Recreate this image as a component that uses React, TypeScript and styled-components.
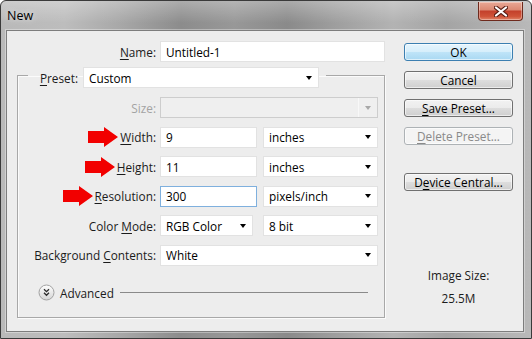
import styled, { createGlobalStyle } from 'styled-components';

const GlobalStyle = createGlobalStyle`
  html, body {
    margin: 0;
    padding: 0;
    background: #ffffff;
  }
  body {
    font-family: 'Open Sans', 'Segoe UI', sans-serif;
    font-size: 11.8px;
    color: #1b1b1b;
  }
`;

const Window = styled.div`
  box-sizing: border-box;
  width: 532px;
  height: 339px;
  display: flex;
  flex-direction: column;
  border: 1px solid #3a3a3a;
  border-radius: 6px 6px 0 0;
  overflow: hidden;
  background:
    linear-gradient(180deg, rgba(255, 255, 255, 0.28) 0px, rgba(255, 255, 255, 0) 22px),
    linear-gradient(
      90deg,
      #b9b9b9 0%,
      #bdbdbd 12%,
      #a9a9a9 22%,
      #8c8c8c 34%,
      #989898 44%,
      #8a8a8a 54%,
      #9e9e9e 63%,
      #b3b3b3 74%,
      #a4a4a4 84%,
      #b9b9b9 100%
    );
`;

const TitleBar = styled.div`
  height: 29px;
  flex: none;
  display: flex;
  align-items: center;
  justify-content: space-between;
  padding: 0 8px 0 6px;
`;

const Title = styled.span`
  font-size: 12.5px;
  color: #000;
  text-shadow: 0 0 6px rgba(255, 255, 255, 0.7);
`;

const CloseButton = styled.div`
  align-self: flex-start;
  margin-top: 1px;
  box-sizing: border-box;
  width: 45px;
  height: 19px;
  display: flex;
  align-items: center;
  justify-content: center;
  border: 1px solid #6e2a1d;
  border-top: none;
  border-radius: 0 0 4px 4px;
  background: linear-gradient(180deg, #e9a896 0%, #dc8a74 42%, #c4412c 52%, #cf5338 80%, #e0866a 100%);
  box-shadow: inset 0 0 0 1px rgba(255, 255, 255, 0.35);
`;

const Panel = styled.div`
  flex: 1;
  display: flex;
  margin: 0 7px 6px 5px;
  padding: 10px 10px 0 10px;
  border: 1px solid #7d7d7d;
  background: #ededed;
  box-shadow: 0 0 0 1px rgba(255, 255, 255, 0.35);
`;

const FormColumn = styled.div`
  width: 368px;
  display: flex;
  flex-direction: column;
`;

const FieldRow = styled.div`
  display: flex;
  align-items: center;
  gap: 4px;
  height: 21px;
`;

const FieldLabel = styled.label<{ $width: number; $disabled?: boolean }>`
  width: ${(p) => p.$width}px;
  flex: none;
  display: flex;
  align-items: center;
  justify-content: flex-end;
  gap: 2px;
  white-space: nowrap;
  color: ${(p) => (p.$disabled ? '#a3a3a3' : '#1b1b1b')};

  u {
    text-decoration: underline;
    text-underline-offset: 2px;
  }
`;

const FieldPair = styled.div<{ $gap?: number }>`
  display: flex;
  gap: ${(p) => p.$gap ?? 6}px;
`;

const TextField = styled.input<{ $width: number; $focused?: boolean }>`
  box-sizing: border-box;
  width: ${(p) => p.$width}px;
  height: 21px;
  margin: 0;
  padding: 0 5px;
  font: inherit;
  color: #000;
  background: #fff;
  border: 1px solid ${(p) => (p.$focused ? '#7fb0de' : '#e2e2e2')};
  outline: none;
`;

const Combo = styled.div<{ $width: number; $disabled?: boolean }>`
  box-sizing: border-box;
  width: ${(p) => p.$width}px;
  height: 21px;
  display: flex;
  align-items: center;
  justify-content: space-between;
  padding-left: 5px;
  color: #000;
  background: ${(p) => (p.$disabled ? '#efefef' : '#fff')};
  border: 1px solid ${(p) => (p.$disabled ? '#cdcdcd' : '#e2e2e2')};
`;

const CaretBox = styled.span<{ $disabled?: boolean }>`
  width: 18px;
  height: 100%;
  display: flex;
  align-items: center;
  justify-content: center;
  border-left: 1px solid ${(p) => (p.$disabled ? '#f8f8f8' : 'transparent')};
`;

const Caret = styled.span<{ $disabled?: boolean }>`
  width: 0;
  height: 0;
  border-left: 3.5px solid transparent;
  border-right: 3.5px solid transparent;
  border-top: 4px solid ${(p) => (p.$disabled ? '#a8a8a8' : '#000')};
`;

const GroupBox = styled.fieldset`
  margin: 1px 0 0 0;
  padding: 9px 6px 16px 0;
  min-width: 0;
  display: flex;
  flex-direction: column;
  gap: 8.5px;
  border: 1px solid #a8a8a8;
  box-shadow: 1px 1px 0 #fbfbfb, inset 1px 1px 0 #fbfbfb;
`;

const GroupLegend = styled.legend`
  margin-left: 10px;
  padding: 4px 7px 0 0;
  display: flex;
  align-items: center;
  gap: 5px;
`;

const AdvancedRow = styled.div`
  display: flex;
  align-items: center;
  gap: 5px;
  height: 17px;
  margin: 10px 10px 0 20px;
  color: #1b1b1b;
`;

const Rule = styled.span`
  flex: 1;
  height: 1px;
  margin-left: 1px;
  background: #8a8a8a;
`;

const ButtonColumn = styled.div`
  width: 109px;
  margin-left: 19px;
  padding-top: 2px;
  display: flex;
  flex-direction: column;
  gap: 10px;
`;

const DialogButton = styled.button<{ $variant?: 'default' | 'normal' | 'disabled'; $spaced?: boolean }>`
  box-sizing: border-box;
  height: 18px;
  margin: ${(p) => (p.$spaced ? '18px 0 0 0' : '0')};
  padding: 0;
  font: inherit;
  line-height: 16px;
  border-radius: 3px;
  color: ${(p) => (p.$variant === 'disabled' ? '#8a8a8a' : '#000')};
  border: 1px solid
    ${(p) => (p.$variant === 'default' ? '#3c7fb1' : p.$variant === 'disabled' ? '#adb2b5' : '#707070')};
  background: ${(p) =>
    p.$variant === 'default'
      ? 'linear-gradient(180deg, #e6f5fd 0%, #d6eefb 50%, #bfe4f8 51%, #a9d8f2 100%)'
      : p.$variant === 'disabled'
        ? '#f4f4f4'
        : 'linear-gradient(180deg, #f2f2f2 0%, #ebebeb 50%, #dddddd 51%, #cfcfcf 100%)'};
  box-shadow: inset 0 0 0 1px rgba(255, 255, 255, 0.6);

  u {
    text-decoration: underline;
    text-underline-offset: 2px;
  }
`;

const ImageSize = styled.div`
  margin-top: 66px;
  display: flex;
  flex-direction: column;
  align-items: center;
  gap: 7px;
  line-height: 16px;
  color: #1b1b1b;
`;

const RedArrow = () => (
  <svg width="30" height="20" viewBox="0 0 30 20">
    <polygon points="0,4 16,4 16,0 30,10 16,20 16,16 0,16" fill="#f20000" />
  </svg>
);

const CloseGlyph = () => (
  <svg width="14" height="11" viewBox="0 0 14 11">
    <path d="M2 1.5 L12 9.5 M12 1.5 L2 9.5" stroke="#5a1f15" strokeWidth="4.2" strokeLinecap="round" />
    <path d="M2 1.5 L12 9.5 M12 1.5 L2 9.5" stroke="#ffffff" strokeWidth="2.2" strokeLinecap="round" />
  </svg>
);

const ChevronButton = () => (
  <svg width="17" height="17" viewBox="0 0 17 17">
    <defs>
      <linearGradient id="advFill" x1="0" y1="0" x2="0" y2="1">
        <stop offset="0" stopColor="#ffffff" />
        <stop offset="1" stopColor="#d4d4d4" />
      </linearGradient>
    </defs>
    <circle cx="8.5" cy="8.5" r="7.5" fill="url(#advFill)" stroke="#a2a2a2" />
    <path d="M6 5.2 L8.5 7.7 L11 5.2 M6 8.8 L8.5 11.3 L11 8.8" fill="none" stroke="#2a2a2a" strokeWidth="1.3" />
  </svg>
);

type SelectProps = { width: number; value?: string; disabled?: boolean };

const Select = ({ width, value = '', disabled }: SelectProps) => (
  <Combo $width={width} $disabled={disabled}>
    <span>{value}</span>
    <CaretBox $disabled={disabled}>
      <Caret $disabled={disabled} />
    </CaretBox>
  </Combo>
);

const LABEL_W = 138;

const App = () => {
  return (
    <>
      <GlobalStyle />
      <Window>
        <TitleBar>
          <Title>New</Title>
          <CloseButton>
            <CloseGlyph />
          </CloseButton>
        </TitleBar>
        <Panel>
          <FormColumn>
            <FieldRow>
              <FieldLabel $width={139}>
                <span>
                  <u>N</u>ame:
                </span>
              </FieldLabel>
              <TextField $width={225} value="Untitled-1" readOnly />
            </FieldRow>

            <GroupBox>
              <GroupLegend>
                <FieldLabel $width={50}>
                  <span>
                    <u>P</u>reset:
                  </span>
                </FieldLabel>
                <Select width={236} value="Custom" />
              </GroupLegend>

              <FieldRow>
                <FieldLabel $width={LABEL_W} $disabled>
                  Size:
                </FieldLabel>
                <Select width={218} disabled />
              </FieldRow>

              <FieldRow>
                <FieldLabel $width={LABEL_W}>
                  <RedArrow />
                  <span>
                    <u>W</u>idth:
                  </span>
                </FieldLabel>
                <FieldPair>
                  <TextField $width={97} value="9" readOnly />
                  <Select width={115} value="inches" />
                </FieldPair>
              </FieldRow>

              <FieldRow>
                <FieldLabel $width={LABEL_W}>
                  <RedArrow />
                  <span>
                    <u>H</u>eight:
                  </span>
                </FieldLabel>
                <FieldPair>
                  <TextField $width={97} value="11" readOnly />
                  <Select width={115} value="inches" />
                </FieldPair>
              </FieldRow>

              <FieldRow>
                <FieldLabel $width={LABEL_W}>
                  <RedArrow />
                  <span>
                    <u>R</u>esolution:
                  </span>
                </FieldLabel>
                <FieldPair>
                  <TextField $width={97} value="300" readOnly $focused />
                  <Select width={115} value="pixels/inch" />
                </FieldPair>
              </FieldRow>

              <FieldRow>
                <FieldLabel $width={LABEL_W}>
                  <span>
                    Color <u>M</u>ode:
                  </span>
                </FieldLabel>
                <FieldPair $gap={10}>
                  <Select width={93} value="RGB Color" />
                  <Select width={115} value="8 bit" />
                </FieldPair>
              </FieldRow>

              <FieldRow>
                <FieldLabel $width={LABEL_W}>
                  <span>
                    Background <u>C</u>ontents:
                  </span>
                </FieldLabel>
                <Select width={218} value="White" />
              </FieldRow>

              <AdvancedRow>
                <ChevronButton />
                <span>Advanced</span>
                <Rule />
              </AdvancedRow>
            </GroupBox>
          </FormColumn>

          <ButtonColumn>
            <DialogButton $variant="default">OK</DialogButton>
            <DialogButton>Cancel</DialogButton>
            <DialogButton>
              <u>S</u>ave Preset...
            </DialogButton>
            <DialogButton $variant="disabled">
              <u>D</u>elete Preset...
            </DialogButton>
            <DialogButton $spaced>
              D<u>e</u>vice Central...
            </DialogButton>
            <ImageSize>
              <span>Image Size:</span>
              <span>25.5M</span>
            </ImageSize>
          </ButtonColumn>
        </Panel>
      </Window>
    </>
  );
};

export default App;
